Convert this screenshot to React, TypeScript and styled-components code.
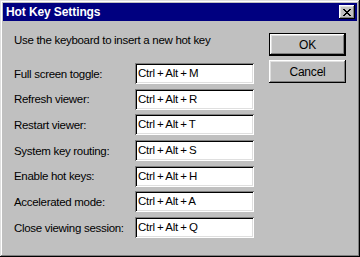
import React from 'react'
import styled, { createGlobalStyle } from 'styled-components'

const GlobalStyle = createGlobalStyle`
  html, body {
    margin: 0;
    padding: 0;
    background: #c0c0c0;
  }
  body {
    font-family: "Liberation Sans", Arial, sans-serif;
  }
`

const Window = styled.div`
  box-sizing: border-box;
  width: 360px;
  height: 257px;
  padding: 3px;
  background: #c0c0c0;
  box-shadow: inset -1px -1px #000000, inset 1px 1px #dfdfdf,
    inset -2px -2px #808080, inset 2px 2px #ffffff;
  display: flex;
  flex-direction: column;
`

const TitleBar = styled.div`
  height: 18px;
  background: #000080;
  display: flex;
  align-items: center;
  justify-content: space-between;
  padding: 0 2px 0 3px;
`

const Title = styled.span`
  color: #ffffff;
  font-weight: bold;
  font-size: 12px;
  letter-spacing: -0.1px;
`

const CloseButton = styled.button`
  box-sizing: border-box;
  width: 16px;
  height: 14px;
  padding: 0;
  border: none;
  background: #c0c0c0;
  box-shadow: inset -1px -1px #000000, inset 1px 1px #ffffff,
    inset -2px -2px #808080, inset 2px 2px #dfdfdf;
  display: flex;
  align-items: center;
  justify-content: center;
`

const Body = styled.div`
  flex: 1;
  display: flex;
  justify-content: space-between;
  padding: 11px 11px 0 11px;
  font-size: 11.5px;
  letter-spacing: -0.3px;
  color: #000000;
`

const Fields = styled.div`
  display: flex;
  flex-direction: column;
`

const Instruction = styled.div`
  height: 16px;
  line-height: 16px;
  margin-bottom: 15px;
  white-space: nowrap;
`

const Rows = styled.div`
  display: flex;
  flex-direction: column;
  gap: 4.7px;
`

const Row = styled.div`
  display: flex;
  align-items: center;
  height: 21px;
`

const Label = styled.span`
  width: 121px;
  flex-shrink: 0;
  white-space: nowrap;
`

const KeyBox = styled.div`
  box-sizing: border-box;
  width: 119px;
  height: 21px;
  padding: 2px 3px 0;
  background: #ffffff;
  line-height: 17px;
  white-space: nowrap;
  word-spacing: -0.5px;
  box-shadow: inset 1px 1px #808080, inset -1px -1px #ffffff,
    inset 2px 2px #000000, inset -2px -2px #dfdfdf;
`

const Buttons = styled.div`
  display: flex;
  flex-direction: column;
  gap: 4px;
  padding-top: 1px;
`

const Button = styled.button<{ $default?: boolean }>`
  box-sizing: border-box;
  width: 77px;
  height: 23px;
  padding: 0;
  border: ${(p) => (p.$default ? '1px solid #000000' : 'none')};
  background: #c0c0c0;
  font-family: inherit;
  font-size: 12px;
  letter-spacing: -0.2px;
  color: #000000;
  box-shadow: inset -1px -1px #000000, inset 1px 1px #ffffff,
    inset -2px -2px #808080, inset 2px 2px #dfdfdf;
`

const hotKeys = [
  { label: 'Full screen toggle:', keys: 'Ctrl + Alt + M' },
  { label: 'Refresh viewer:', keys: 'Ctrl + Alt + R' },
  { label: 'Restart viewer:', keys: 'Ctrl + Alt + T' },
  { label: 'System key routing:', keys: 'Ctrl + Alt + S' },
  { label: 'Enable hot keys:', keys: 'Ctrl + Alt + H' },
  { label: 'Accelerated mode:', keys: 'Ctrl + Alt + A' },
  { label: 'Close viewing session:', keys: 'Ctrl + Alt + Q' },
]

const App = () => {
  return (
    <>
      <GlobalStyle />
      <Window>
        <TitleBar>
          <Title>Hot Key Settings</Title>
          <CloseButton aria-label="Close">
            <svg width="8" height="7" viewBox="0 0 8 7">
              <path d="M0 0h2v1h1v1h2V1h1V0h2v1H7v1H6v1H5v1h1v1h1v1h1v1H6V6H5V5H3v1H2v1H0V6h1V5h1V4h1V3H2V2H1V1H0z" fill="#000" />
            </svg>
          </CloseButton>
        </TitleBar>
        <Body>
          <Fields>
            <Instruction>Use the keyboard to insert a new hot key</Instruction>
            <Rows>
              {hotKeys.map((item) => (
                <Row key={item.label}>
                  <Label>{item.label}</Label>
                  <KeyBox>{item.keys}</KeyBox>
                </Row>
              ))}
            </Rows>
          </Fields>
          <Buttons>
            <Button $default>OK</Button>
            <Button>Cancel</Button>
          </Buttons>
        </Body>
      </Window>
    </>
  )
}

export default App
